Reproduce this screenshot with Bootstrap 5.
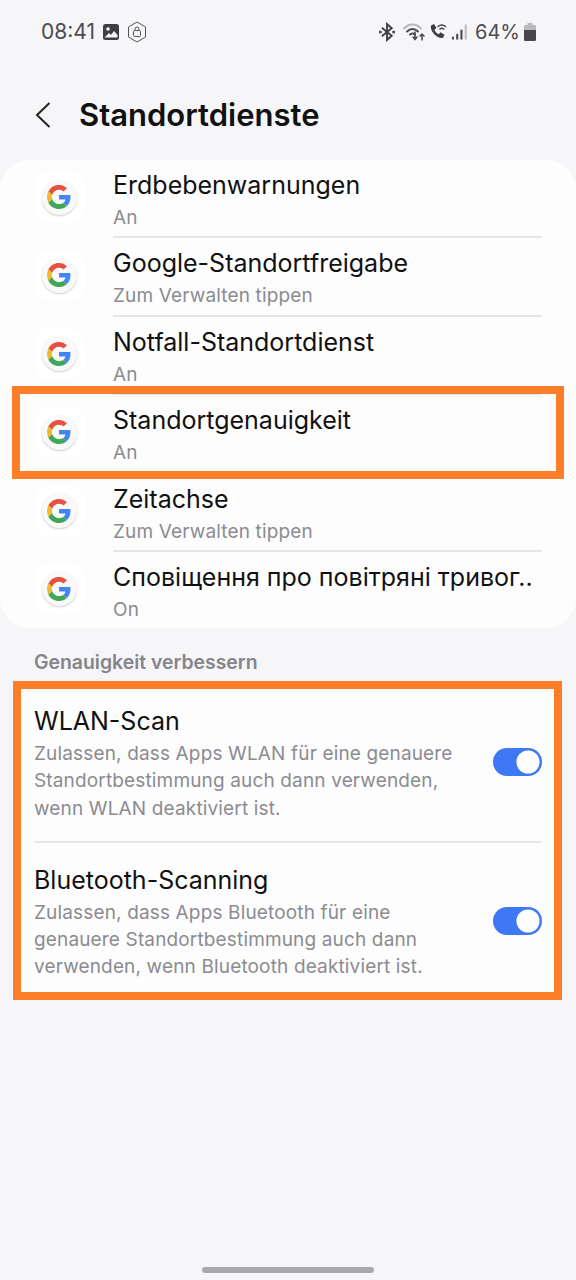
<!DOCTYPE html>
<html lang="de">
<head>
  <meta charset="UTF-8">
  <title>Standortdienste</title>
  <meta name="viewport" content="width=device-width, initial-scale=1">
  <link href="https://cdn.jsdelivr.net/npm/bootstrap@5.3.3/dist/css/bootstrap.min.css" rel="stylesheet">
  <style>
    body {
      font-family: Inter, "Noto Sans", sans-serif;
      background-color: #f6f6f9;
      color: #111;
      width: 576px;
      height: 1280px;
      overflow: hidden;
      position: relative;
    }

    .status-bar {
      height: 62px;
      padding: 2px 40px 0 41px;
      color: #4c4c50;
      font-size: 21px;
    }

    .batt-level { font-size: 20px; }

    .page-head {
      height: 98px;
      padding-left: 35px;
      padding-top: 8px;
    }

    .page-title {
      font-size: 31px;
      font-weight: 600;
      margin: 0 0 0 28px;
      color: #111;
    }

    .app-card {
      background-color: #fdfdfe;
      border-radius: 30px;
      height: 468px;
    }

    .app-row {
      height: 78.4px;
      padding-left: 34px;
    }

    .g-tile {
      width: 50px;
      height: 50px;
      border-radius: 14px;
      background-color: #fff;
      margin-top: 12px;
      flex: none;
    }

    .g-disc {
      width: 35px;
      height: 35px;
      border-radius: 50%;
      background-color: #f9f9f9;
      box-shadow: 0 1px 2px rgba(0,0,0,.2);
    }

    .app-text {
      margin-left: 29px;
      margin-right: 34px;
      flex: 1;
      min-width: 0;
      border-bottom: 2px solid #e6e6e8;
      padding-top: 9px;
    }

    .app-row:last-child .app-text { border-bottom: 0; }

    .row-title {
      font-size: 25px;
      line-height: 33px;
      white-space: nowrap;
      color: #111;
    }

    .row-sub {
      font-size: 19px;
      line-height: 27.3px;
      letter-spacing: .15px;
      color: #8b8b90;
    }

    .app-text .row-sub { margin-top: 2px; white-space: nowrap; }

    .section-label {
      font-size: 19.4px;
      font-weight: 600;
      color: #85858b;
      padding: 24px 0 0 34px;
      height: 53px;
      line-height: 21px;
    }

    .mark-box { border: 8px solid #fd7e28; }

    .mark-over {
      position: absolute;
      left: 12px;
      top: 386px;
      width: 552px;
      height: 93px;
    }

    .scan-card {
      background-color: #fdfdfe;
      margin-left: 13px;
      width: 549px;
      height: 319px;
    }

    .scan-row {
      height: 151.5px;
      margin: 0 12px 0 13px;
      padding-top: 16px;
    }

    .scan-row + .scan-row {
      border-top: 2px solid #e6e6e8;
      height: 152px;
      padding-top: 21px;
    }

    .scan-copy { width: 440px; }
    .scan-copy .row-title { margin-bottom: 2px; }

    .toggle-cell { height: 114px; }

    .form-switch .scan-toggle {
      width: 49px;
      height: 28px;
      margin: 0;
      float: none;
      border: 0;
      background-color: #3e78f4;
      background-image: url("data:image/svg+xml,%3csvg xmlns='http://www.w3.org/2000/svg' viewBox='-4 -4 8 8'%3e%3ccircle r='3.3' fill='%23fff'/%3e%3c/svg%3e");
      background-position: right center;
      opacity: 1;
    }

    .home-bar {
      position: absolute;
      left: 202px;
      top: 1267px;
      width: 172px;
      height: 6px;
      border-radius: 3px;
      background-color: #a9a9ab;
    }
  </style>
</head>
<body>

<svg width="0" height="0" class="position-absolute">
  <symbol id="g-logo" viewBox="0 0 48 48">
    <path fill="#e8513f" d="M24 9.5c3.9 0 6.9 1.6 9.1 3.7l6.8-6.8C35.7 2.5 30.4 0 24 0 14.6 0 6.5 5.4 2.6 13.2l7.9 6.2C12.4 13.6 17.7 9.5 24 9.5z"/>
    <path fill="#4285f4" d="M46.9 24.5c0-1.6-.1-3.1-.4-4.5H24v9h12.9c-.6 3-2.2 5.5-4.8 7.2l7.7 6c4.5-4.2 7.1-10.3 7.1-17.7z"/>
    <path fill="#f2b92f" d="M10.5 28.6c-.5-1.4-.8-3-.8-4.6s.3-3.2.8-4.6l-7.9-6.2C1 16.5 0 20.1 0 24s1 7.5 2.6 10.8l7.9-6.2z"/>
    <path fill="#3fa757" d="M24 48c6.5 0 11.9-2.1 15.8-5.8l-7.7-6c-2.1 1.4-4.9 2.3-8.1 2.3-6.3 0-11.6-4.2-13.5-9.9l-7.9 6.2C6.5 42.6 14.6 48 24 48z"/>
  </symbol>
</svg>

<!-- Status bar -->
<div class="status-bar d-flex align-items-center">
  <span>08:41</span>
  <svg class="ms-2" width="16" height="16" viewBox="0 0 16 16"><rect width="16" height="16" rx="2.500" fill="#3f3f43"/><circle cx="5" cy="5" r="1.800" fill="#f6f6f9"/><path d="M1.500 13.500 6 9l2 2 3-4 3.500 4v2.500z" fill="#f6f6f9"/></svg>
  <svg class="ms-2" width="20" height="22" viewBox="0 0 20 22" fill="none" stroke="#55555a"><path d="M10 1 18.500 6v10L10 21 1.500 16V6z"/><rect x="6.500" y="9.500" width="7" height="6" rx="1.200"/><path d="M8 9.500V8a2 2 0 0 1 4 0v1.500"/></svg>
  <div class="ms-auto d-flex align-items-center">
    <svg width="16" height="20" viewBox="0 0 17 20" fill="none" stroke="#3f3f43" stroke-width="2"><path d="M3 5.500 13.500 14 8.500 18.500V1.500L13.500 6 3 14.500"/><circle cx="1.500" cy="10" r=".6"/><circle cx="15.500" cy="10" r=".6"/></svg>
    <svg class="ms-2" width="22" height="20" viewBox="0 0 22 20" fill="none" stroke-linecap="round"><path d="M1 6.500C6 1 13 1 18 6.500" stroke="#b8b8bb" stroke-width="2"/><path d="M4 9.500C7.500 6 11.500 6 15 9.500M7 12.500c2-1.500 3.500-1.500 5 0" stroke="#4a4a4e" stroke-width="2"/><path d="M12 10v7M10 15l2 2.500 2-2.500" stroke="#4a4a4e" stroke-width="1.500"/><path d="M19 18v-6M17 14l2-2 2 2" stroke="#4a4a4e" stroke-width="1.500"/></svg>
    <svg class="ms-1" width="18" height="18" viewBox="0 0 18 18" fill="none"><path d="M2 2.500 5 1l2.500 4-2 1.800c.8 2 2.200 3.500 4.300 4.500l1.700-2 4 2.500-1.500 3C9 16.500 .5 8.500 2 2.500z" fill="#3f3f43"/><path d="M9 3.500c2.500-2 5-2 7.500 0M11 6c1.200-1 2.500-1 3.700 0" stroke="#3f3f43" stroke-width="1.500" stroke-linecap="round"/></svg>
    <svg class="ms-1" width="16" height="18" viewBox="0 0 17 18"><rect x="1" y="14" width="2.200" height="3" fill="#4a4a4e"/><rect x="5.500" y="11" width="2.200" height="6" fill="#4a4a4e"/><rect x="10" y="6.500" width="2.200" height="10.500" fill="#4a4a4e"/><rect x="14.500" y="1" width="2.200" height="16" fill="#bdbdc0"/></svg>
    <span class="batt-level ms-2">64%</span>
    <svg class="ms-1" width="12" height="18" viewBox="0 0 12 18"><path d="M3.500 0h5v2h2.200q1.300 0 1.300 1.300V7H0V3.300Q0 2 1.300 2h2.200z" fill="#b9b9bc"/><path d="M0 7h12v9.700q0 1.300-1.300 1.300H1.300Q0 18 0 16.700z" fill="#47474b"/></svg>
  </div>
</div>

<!-- Title -->
<div class="page-head d-flex align-items-center">
  <svg width="16" height="26" viewBox="0 0 16 26" fill="none" stroke="#222" stroke-width="2"><path d="M14.500 1 2 13l12.500 12"/></svg>
  <h1 class="page-title">Standortdienste</h1>
</div>

<!-- Apps -->
<div class="app-card overflow-hidden">
  <div class="app-row d-flex">
    <div class="g-tile d-flex align-items-center justify-content-center"><div class="g-disc d-flex align-items-center justify-content-center"><svg width="24" height="24"><use href="#g-logo"/></svg></div></div>
    <div class="app-text"><div class="row-title">Erdbebenwarnungen</div><div class="row-sub">An</div></div>
  </div>
  <div class="app-row d-flex">
    <div class="g-tile d-flex align-items-center justify-content-center"><div class="g-disc d-flex align-items-center justify-content-center"><svg width="24" height="24"><use href="#g-logo"/></svg></div></div>
    <div class="app-text"><div class="row-title">Google-Standortfreigabe</div><div class="row-sub">Zum Verwalten tippen</div></div>
  </div>
  <div class="app-row d-flex">
    <div class="g-tile d-flex align-items-center justify-content-center"><div class="g-disc d-flex align-items-center justify-content-center"><svg width="24" height="24"><use href="#g-logo"/></svg></div></div>
    <div class="app-text"><div class="row-title">Notfall-Standortdienst</div><div class="row-sub">An</div></div>
  </div>
  <div class="app-row d-flex">
    <div class="g-tile d-flex align-items-center justify-content-center"><div class="g-disc d-flex align-items-center justify-content-center"><svg width="24" height="24"><use href="#g-logo"/></svg></div></div>
    <div class="app-text"><div class="row-title">Standortgenauigkeit</div><div class="row-sub">An</div></div>
  </div>
  <div class="app-row d-flex">
    <div class="g-tile d-flex align-items-center justify-content-center"><div class="g-disc d-flex align-items-center justify-content-center"><svg width="24" height="24"><use href="#g-logo"/></svg></div></div>
    <div class="app-text"><div class="row-title">Zeitachse</div><div class="row-sub">Zum Verwalten tippen</div></div>
  </div>
  <div class="app-row d-flex">
    <div class="g-tile d-flex align-items-center justify-content-center"><div class="g-disc d-flex align-items-center justify-content-center"><svg width="24" height="24"><use href="#g-logo"/></svg></div></div>
    <div class="app-text"><div class="row-title">Сповіщення про повітряні тривог..</div><div class="row-sub">On</div></div>
  </div>
</div>

<div class="mark-box mark-over"></div>

<div class="section-label">Genauigkeit verbessern</div>

<!-- Scanning -->
<div class="scan-card mark-box">
  <div class="scan-row d-flex justify-content-between">
    <div class="scan-copy">
      <div class="row-title">WLAN-Scan</div>
      <div class="row-sub">Zulassen, dass Apps WLAN für eine genauere Standortbestimmung auch dann verwenden, wenn WLAN deaktiviert ist.</div>
    </div>
    <div class="toggle-cell form-check form-switch m-0 p-0 d-flex align-items-center">
      <input class="form-check-input scan-toggle" type="checkbox" role="switch" checked>
    </div>
  </div>
  <div class="scan-row d-flex justify-content-between">
    <div class="scan-copy">
      <div class="row-title">Bluetooth-Scanning</div>
      <div class="row-sub">Zulassen, dass Apps Bluetooth für eine genauere Standortbestimmung auch dann verwenden, wenn Bluetooth deaktiviert ist.</div>
    </div>
    <div class="toggle-cell form-check form-switch m-0 p-0 d-flex align-items-center">
      <input class="form-check-input scan-toggle" type="checkbox" role="switch" checked>
    </div>
  </div>
</div>

<div class="home-bar"></div>

<script src="https://cdn.jsdelivr.net/npm/bootstrap@5.3.3/dist/js/bootstrap.bundle.min.js"></script>
</body>
</html>
